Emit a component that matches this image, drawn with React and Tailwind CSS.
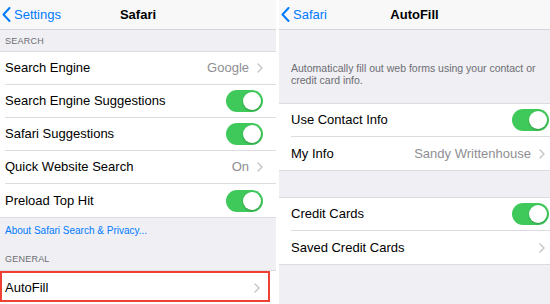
import React from 'react';

const font = { fontFamily: '"Liberation Sans", Arial, sans-serif' };

function BackChevron() {
  return (
    <svg width="9" height="15" viewBox="0 0 9 15" className="shrink-0">
      <path d="M7.5 1 L1.5 7.5 L7.5 14" fill="none" stroke="#007aff" strokeWidth="2" strokeLinecap="round" strokeLinejoin="round" />
    </svg>
  );
}

function Chevron() {
  return (
    <svg width="6" height="10" viewBox="0 0 6 10" className="shrink-0">
      <path d="M1 1 L5 5 L1 9" fill="none" stroke="#c4c4c8" strokeWidth="1.4" strokeLinecap="round" strokeLinejoin="round" />
    </svg>
  );
}

function Toggle() {
  return (
    <div className="relative w-[37px] h-[22px] rounded-full bg-[#3fc95a] shrink-0">
      <div className="absolute right-[2px] top-[2px] w-[18px] h-[18px] rounded-full bg-white shadow-[0_1px_2px_rgba(0,0,0,0.25)]" />
    </div>
  );
}

function Row({ label, value, toggle, chevron, last, pl, pr }) {
  return (
    <div className={`flex items-stretch h-[33px] bg-white ${pl}`}>
      <div className={`flex flex-1 items-center ${pr} ${last ? '' : 'border-b border-[#dcdce0]'}`}>
        <span className="flex-1 text-[13px] text-black whitespace-nowrap">{label}</span>
        {value && <span className="text-[13px] text-[#8e8e93] mr-[8px] whitespace-nowrap">{value}</span>}
        {chevron && <Chevron />}
        {toggle && <Toggle />}
      </div>
    </div>
  );
}

function NavBar({ back, title }) {
  return (
    <div className="relative h-[30px] bg-[#f8f8f8] border-b border-[#d6d6da] flex items-center">
      <div className="flex items-center gap-[3px] pl-[2px] text-[13px] text-[#007aff]">
        <BackChevron />
        <span>{back}</span>
      </div>
      <div className="absolute inset-0 flex items-center justify-center text-[13px] font-bold text-black">{title}</div>
    </div>
  );
}

function LeftPanel() {
  const pl = 'pl-[5px]';
  const pr = 'pr-[13px]';
  return (
    <div className="relative w-[276px] h-[304px] bg-[#efeff4] shrink-0 overflow-hidden">
      <NavBar back="Settings" title="Safari" />
      <div className="h-[21px] flex items-end pb-[3px] pl-[5px] text-[9px] text-[#6d6d72] tracking-wide">SEARCH</div>
      <div className="border-y border-[#dcdce0]">
        <Row pl={pl} pr={pr} label="Search Engine" value="Google" chevron />
        <Row pl={pl} pr={pr} label="Search Engine Suggestions" toggle />
        <Row pl={pl} pr={pr} label="Safari Suggestions" toggle />
        <Row pl={pl} pr={pr} label="Quick Website Search" value="On" chevron />
        <Row pl={pl} pr={pr} label="Preload Top Hit" toggle last />
      </div>
      <div className="h-[52px] pl-[5px]">
        <div className="pt-[5px] text-[10px] text-[#007aff]">About Safari Search &amp; Privacy...</div>
        <div className="pt-[15px] text-[9px] text-[#6d6d72] tracking-wide">GENERAL</div>
      </div>
      <div className="relative border-t border-[#dcdce0]">
        <Row pl={pl} pr="pr-[16px]" label="AutoFill" chevron last />
        <div className="absolute left-0 top-0 w-[270px] h-[31px] border-2 border-[#ef4034]" />
      </div>
    </div>
  );
}

function RightPanel() {
  const pl = 'pl-[12px]';
  const pr = 'pr-[1px]';
  return (
    <div className="relative flex-1 h-[304px] bg-[#efeff4] overflow-hidden">
      <NavBar back="Safari" title="AutoFill" />
      <div className="h-[73px] pl-[12px] pr-0 pt-[32px] text-[10.5px] leading-[12px] text-[#6d6d72]">
        Automatically fill out web forms using your contact or credit card info.
      </div>
      <div className="border-y border-[#dcdce0]">
        <Row pl={pl} pr={pr} label="Use Contact Info" toggle />
        <Row pl={pl} pr="pr-[5px]" label="My Info" value="Sandy Writtenhouse" chevron last />
      </div>
      <div className="h-[26px]" />
      <div className="border-y border-[#dcdce0]">
        <Row pl={pl} pr={pr} label="Credit Cards" toggle />
        <Row pl={pl} pr="pr-[5px]" label="Saved Credit Cards" chevron last />
      </div>
    </div>
  );
}

export default function App() {
  return (
    <div className="w-[550px] h-[304px] bg-white flex gap-[3px] overflow-hidden" style={font}>
      <LeftPanel />
      <RightPanel />
    </div>
  );
}
